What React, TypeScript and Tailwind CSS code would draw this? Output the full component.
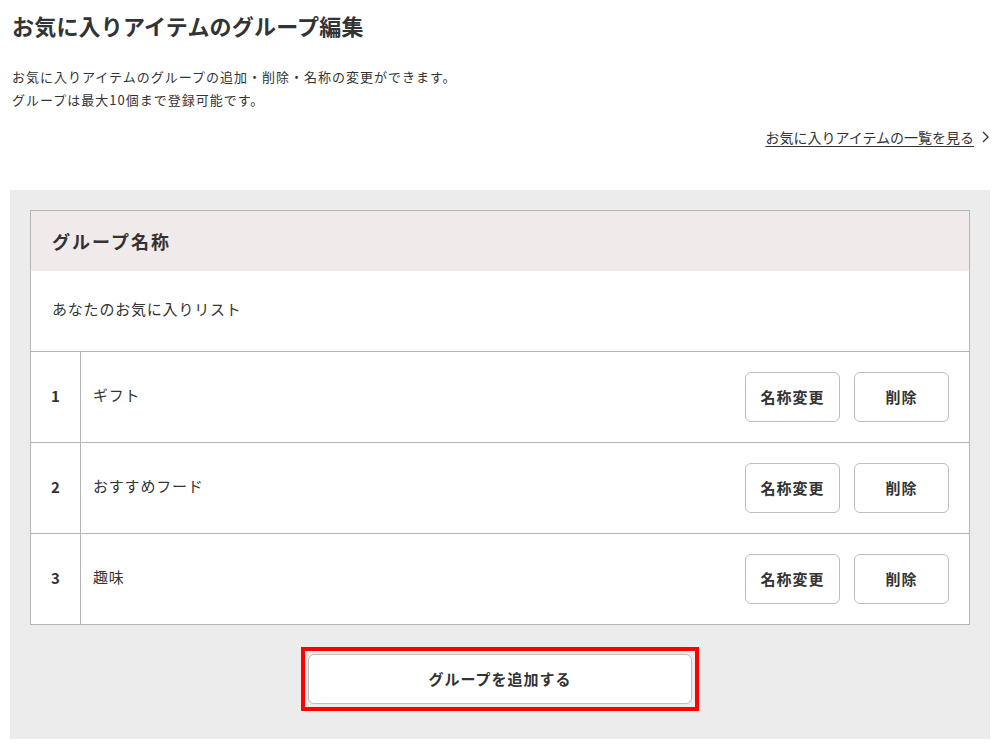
const font = { fontFamily: '"Noto Sans CJK JP", "Noto Sans", sans-serif' };

const groups = [
  { no: 1, name: 'ギフト' },
  { no: 2, name: 'おすすめフード' },
  { no: 3, name: '趣味' },
];

function GroupRow({ no, name }: { no: number; name: string }) {
  return (
    <div className="flex h-[91px] border-t border-[#b5b5b5]">
      <div className="w-[50px] shrink-0 border-r border-[#b5b5b5] flex items-center justify-center text-[15px] font-bold text-[#333] pb-[2px]">
        {no}
      </div>
      <div className="flex-1 flex items-center justify-between pl-3 pr-5">
        <span className="text-[15px] tracking-[0.8px] text-[#333] pb-[3px]">{name}</span>
        <div className="flex gap-[14px]">
          <button className="w-[95px] h-[50px] bg-white border border-[#bdbdbd] rounded-[6px] text-[15px] tracking-[1px] font-bold text-[#333]">
            名称変更
          </button>
          <button className="w-[95px] h-[50px] bg-white border border-[#bdbdbd] rounded-[6px] text-[15px] tracking-[1px] font-bold text-[#333]">
            削除
          </button>
        </div>
      </div>
    </div>
  );
}

export default function App() {
  return (
    <div className="w-[1000px] min-h-[751px] bg-white px-[10px] text-[#333]" style={font}>
      <h1 className="pt-[9px] pl-[2px] text-[22px] leading-[32px] tracking-[0.2px] font-bold">お気に入りアイテムのグループ編集</h1>

      <div className="mt-[24px] pl-[2px] text-[13px] leading-[23px] tracking-[1px]">
        <p>お気に入りアイテムのグループの追加・削除・名称の変更ができます。</p>
        <p>グループは最大10個まで登録可能です。</p>
      </div>

      <div className="mt-[16px] flex justify-end items-center gap-[8px] text-[14px] leading-[20px]">
        <a href="#list" className="underline underline-offset-[3px] text-[#333]">お気に入りアイテムの一覧を見る</a>
        <svg width="7" height="12" viewBox="0 0 7 12" className="mr-[1px]">
          <polyline points="1,1 6,6 1,11" fill="none" stroke="#333" strokeWidth="1.3" />
        </svg>
      </div>

      {/* Group panel */}
      <div className="mt-[43px] bg-[#ececec] px-5 pt-5 pb-[28px]">
        <div className="bg-white border border-[#b5b5b5]">
          <div className="h-[60px] bg-[#f1eaea] flex items-center px-[21px] text-[18px] tracking-[2px] font-bold">グループ名称</div>
          <div className="h-[80px] flex items-center px-[21px] text-[15px] tracking-[0.8px] pb-[3px]">あなたのお気に入りリスト</div>
          {groups.map((g) => (
            <GroupRow key={g.no} no={g.no} name={g.name} />
          ))}
        </div>

        <div className="mt-[22px] flex justify-center">
          <div className="border-4 border-[#ff0000] p-[3px]">
            <button className="w-[384px] h-[50px] bg-white border border-[#bdbdbd] rounded-[6px] text-[15px] tracking-[1px] font-bold text-[#333]">
              グループを追加する
            </button>
          </div>
        </div>
      </div>
    </div>
  );
}
